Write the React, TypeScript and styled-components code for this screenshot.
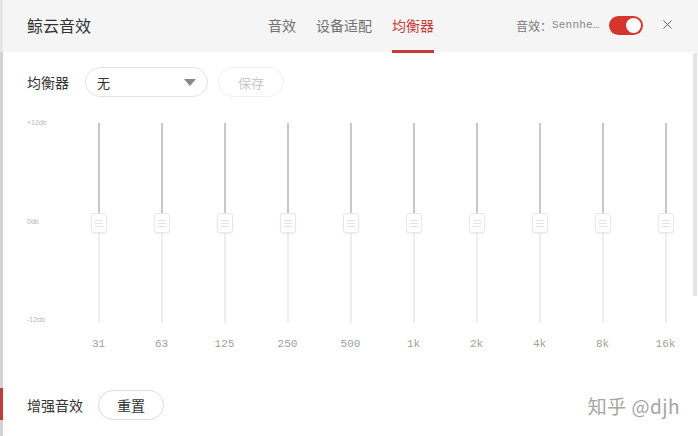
import { X } from 'lucide-react'
import styled, { createGlobalStyle } from 'styled-components'

const GlobalStyle = createGlobalStyle`
  html, body {
    margin: 0;
    padding: 0;
    background: #ffffff;
  }
  body {
    font-family: 'Noto Sans CJK SC', 'Noto Sans', sans-serif;
    color: #333;
  }
  * {
    box-sizing: border-box;
  }
`

const bands = ['31', '63', '125', '250', '500', '1k', '2k', '4k', '8k', '16k']

const Window = styled.div`
  position: relative;
  display: flex;
  width: 698px;
  height: 436px;
  overflow: hidden;
  background: #fff;
`

const LeftEdge = styled.div`
  display: flex;
  flex-direction: column;
  width: 3px;
  flex-shrink: 0;
`

const EdgePart = styled.div<{ $h?: number; $color: string }>`
  height: ${(p) => (p.$h ? `${p.$h}px` : 'auto')};
  flex: ${(p) => (p.$h ? '0 0 auto' : '1 1 auto')};
  background: ${(p) => p.$color};
`

const Main = styled.div`
  flex: 1;
  display: flex;
  flex-direction: column;
`

const Header = styled.div`
  height: 52px;
  display: flex;
  align-items: center;
  background: #f5f5f5;
  padding-left: 24px;
`

const Title = styled.div`
  font-size: 16px;
  color: #333;
  width: 241px;
  line-height: 1;
  margin-top: -2px;
`

const Tabs = styled.div`
  display: flex;
  height: 52px;
  gap: 20px;
`

const Tab = styled.div<{ $active?: boolean }>`
  position: relative;
  display: flex;
  align-items: center;
  height: 52px;
  padding-bottom: 2px;
  font-size: 14px;
  color: ${(p) => (p.$active ? '#c63b35' : '#707070')};
  &::after {
    content: '';
    display: ${(p) => (p.$active ? 'block' : 'none')};
    position: absolute;
    left: 0;
    right: 0;
    bottom: -1px;
    height: 3px;
    background: #c63b35;
  }
`

const EffectInfo = styled.div`
  margin-left: 82px;
  display: flex;
  align-items: center;
  font-size: 12px;
  color: #777;
  margin-top: -2px;
  white-space: nowrap;
`

const EffectName = styled.span`
  font-family: 'Liberation Mono', monospace;
  font-size: 11px;
  letter-spacing: 0.2px;
  color: #888;
`

const Toggle = styled.div`
  margin-left: 9px;
  width: 34px;
  height: 19px;
  border-radius: 10px;
  background: #d6352d;
  display: flex;
  align-items: center;
  justify-content: flex-end;
  padding-right: 2px;
  margin-top: -2px;
`

const Knob = styled.div`
  width: 15px;
  height: 15px;
  border-radius: 50%;
  background: #fff;
`

const CloseBtn = styled.div`
  margin-left: 17px;
  display: flex;
  color: #555;
  margin-top: -4px;
`

const Body = styled.div`
  flex: 1;
  padding: 15px 0 0 24px;
  display: flex;
  flex-direction: column;
`

const Row = styled.div`
  display: flex;
  align-items: center;
  height: 30px;
`

const RowLabel = styled.div<{ $w: number }>`
  width: ${(p) => p.$w}px;
  font-size: 14px;
  color: #333;
`

const Select = styled.div`
  width: 123px;
  height: 30px;
  border: 1px solid #e3e3e3;
  border-radius: 15px;
  display: flex;
  align-items: center;
  justify-content: space-between;
  padding: 0 11px 0 11px;
  font-size: 13px;
  color: #333;
`

const Caret = styled.div`
  width: 0;
  height: 0;
  border-left: 6px solid transparent;
  border-right: 6px solid transparent;
  border-top: 7px solid #888;
`

const PillButton = styled.div<{ $disabled?: boolean }>`
  width: 66px;
  height: 30px;
  border-radius: 15px;
  border: 1px solid ${(p) => (p.$disabled ? '#f0f0f0' : '#dcdcdc')};
  display: flex;
  align-items: center;
  justify-content: center;
  font-size: ${(p) => (p.$disabled ? '13px' : '14px')};
  color: ${(p) => (p.$disabled ? '#c8c8c8' : '#333')};
`

const Gap = styled.div`
  width: 10px;
`

const EqArea = styled.div`
  margin-top: 26px;
  display: grid;
  grid-template-columns: 40px repeat(10, 63px);
`

const Scale = styled.div`
  display: flex;
  flex-direction: column;
  justify-content: space-between;
  height: 204px;
  font-size: 7px;
  color: #b8b8b8;
  font-family: 'Liberation Sans', sans-serif;
  line-height: 7px;
  margin-top: -4px;
`

const Band = styled.div`
  display: flex;
  flex-direction: column;
  align-items: center;
`

const Track = styled.div`
  position: relative;
  width: 2px;
  height: 200px;
  display: flex;
  flex-direction: column;
`

const TrackPart = styled.div<{ $on?: boolean }>`
  flex: 1;
  background: ${(p) => (p.$on ? '#c8c8c8' : '#eeeeee')};
`

const Thumb = styled.div`
  position: absolute;
  left: 50%;
  top: 50%;
  width: 16px;
  height: 20px;
  margin-left: -8px;
  margin-top: -10px;
  background: #fff;
  border: 1px solid #e8e8e8;
  border-radius: 3px;
  box-shadow: 0 1px 2px rgba(0, 0, 0, 0.06);
  display: flex;
  flex-direction: column;
  align-items: center;
  justify-content: center;
  gap: 2px;
`

const Grip = styled.div`
  width: 8px;
  height: 1px;
  background: #e2e2e2;
`

const Freq = styled.div`
  margin-top: 14px;
  font-family: 'Liberation Mono', monospace;
  font-size: 11px;
  color: #a0a0a0;
  line-height: 14px;
`

const BottomRow = styled(Row)`
  margin-top: 39px;
  justify-content: space-between;
  padding-right: 18px;
`

const Left = styled.div`
  display: flex;
  align-items: center;
`

const Watermark = styled.div`
  font-size: 19px;
  color: #a5a5a5;
  font-family: 'Noto Sans CJK SC', 'Liberation Sans', sans-serif;
  letter-spacing: 0.5px;
  text-shadow: 0 0 1px rgba(255, 255, 255, 0.9);
`

const ScrollBar = styled.div`
  position: absolute;
  right: 1px;
  top: 53px;
  width: 4px;
  height: 243px;
  background: #e4e4e4;
`

export default function App() {
  return (
    <>
      <GlobalStyle />
      <Window>
        <LeftEdge>
          <EdgePart $h={52} $color="#e6e6e6" />
          <EdgePart $color="#d2d2d2" />
          <EdgePart $h={32} $color="#c23a3a" />
          <EdgePart $h={16} $color="#d2d2d2" />
        </LeftEdge>
        <Main>
          <Header>
            <Title>鲸云音效</Title>
            <Tabs>
              <Tab>音效</Tab>
              <Tab>设备适配</Tab>
              <Tab $active>均衡器</Tab>
            </Tabs>
            <EffectInfo>
              音效：<EffectName>Sennhe…</EffectName>
            </EffectInfo>
            <Toggle>
              <Knob />
            </Toggle>
            <CloseBtn>
              <X size={15} strokeWidth={1.5} />
            </CloseBtn>
          </Header>
          <Body>
            <Row>
              <RowLabel $w={58}>均衡器</RowLabel>
              <Select>
                <span>无</span>
                <Caret />
              </Select>
              <Gap />
              <PillButton $disabled>保存</PillButton>
            </Row>
            <EqArea>
              <Scale>
                <span>+12db</span>
                <span>0db</span>
                <span>-12db</span>
              </Scale>
              {bands.map((b) => (
                <Band key={b}>
                  <Track>
                    <TrackPart $on />
                    <TrackPart />
                    <Thumb>
                      <Grip />
                      <Grip />
                      <Grip />
                    </Thumb>
                  </Track>
                  <Freq>{b}</Freq>
                </Band>
              ))}
            </EqArea>
            <BottomRow>
              <Left>
                <RowLabel $w={71}>增强音效</RowLabel>
                <PillButton>重置</PillButton>
              </Left>
              <Watermark>知乎 @djh</Watermark>
            </BottomRow>
          </Body>
        </Main>
        <ScrollBar />
      </Window>
    </>
  )
}
